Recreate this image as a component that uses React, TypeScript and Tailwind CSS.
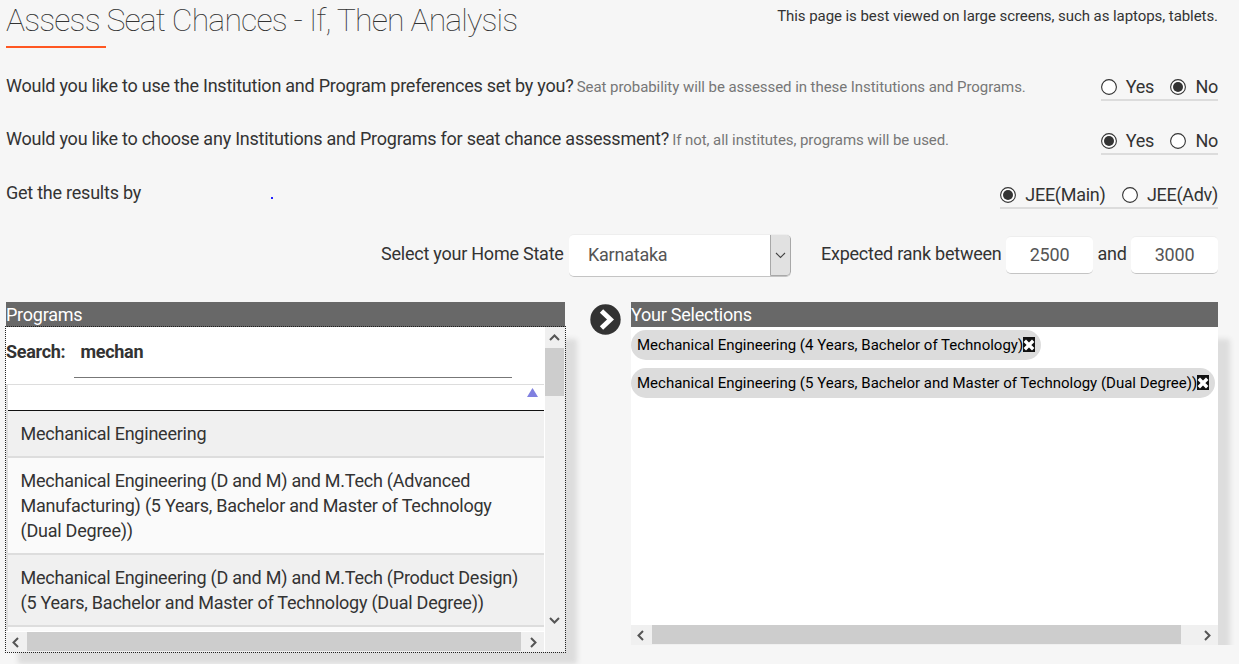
import React from "react";

type RadioProps = { label: string; checked?: boolean };

function Radio({ label, checked = false }: RadioProps) {
  return (
    <label className="flex items-center">
      <svg className="h-4 w-4 shrink-0" viewBox="0 0 16 16">
        <circle cx="8" cy="8" r="7.4" fill="#fff" stroke="#333" strokeWidth="1.1" />
        {checked && <circle cx="8" cy="8" r="5" fill="#333" />}
      </svg>
      <span className="ml-[9px]">{label}</span>
    </label>
  );
}

function RadioGroup({ options, selected }: { options: string[]; selected: string }) {
  return (
    <div className="flex h-[27px] gap-[16.5px] border-b-2 border-[#dcdcdc] tracking-[-0.29px] whitespace-nowrap">
      {options.map((o) => (
        <Radio key={o} label={o} checked={o === selected} />
      ))}
    </div>
  );
}

type Direction = "up" | "down" | "left" | "right";
const CHEVRONS: Record<Direction, string> = {
  up: "M1 8 L5.5 3.5 L10 8",
  down: "M1 3 L5.5 7.5 L10 3",
  left: "M8 1 L3.5 5.5 L8 10",
  right: "M3 1 L7.5 5.5 L3 10",
};

function Chevron({ dir }: { dir: Direction }) {
  return (
    <svg className="h-[11px] w-[11px]" viewBox="0 0 11 11">
      <path d={CHEVRONS[dir]} fill="none" stroke="#555" strokeWidth="2" />
    </svg>
  );
}

function Chip({ text }: { text: string }) {
  return (
    <div className="flex h-[30px] w-fit items-center rounded-full bg-[#dcdcdc] pr-1.5 pl-1.5 text-[15px] tracking-normal whitespace-nowrap text-black">
      <span>{text}</span>
      <svg className="mb-px h-[15px] w-3 shrink-0" viewBox="0 0 12 15">
        <rect width="12" height="15" fill="#111" />
        <path d="M1.8 3.8 L10.2 12.2 M10.2 3.8 L1.8 12.2" stroke="#fff" strokeWidth="3.4" />
      </svg>
    </div>
  );
}

function Question({ text, hint }: { text: string; hint: string }) {
  return (
    <p className="-mt-px whitespace-nowrap">
      {text} <span className="-ml-px text-[15px] tracking-[-0.06px] text-[#777]">{hint}</span>
    </p>
  );
}

export default function App() {
  return (
    <div className="h-[664px] w-[1239px] overflow-hidden bg-[#f6f6f6] pr-[21px] pl-1.5 font-[Roboto,sans-serif] text-[18px] leading-[25px] tracking-[-0.235px] text-[#333]">
      <header className="flex h-[74px] justify-between">
        <div>
          <h1 className="h-[46px] text-[32px] leading-[40px] font-thin tracking-[-0.87px] whitespace-nowrap">
            Assess Seat Chances - If, Then Analysis
          </h1>
          <div className="h-0.5 w-[100px] bg-[#ff5722]" />
        </div>
        <p className="pt-1 text-[15px] tracking-[-0.065px] whitespace-nowrap">
          This page is best viewed on large screens, such as laptops, tablets.
        </p>
      </header>

      <div className="flex h-[53px] justify-between">
        <Question
          text="Would you like to use the Institution and Program preferences set by you?"
          hint="Seat probability will be assessed in these Institutions and Programs."
        />
        <RadioGroup options={["Yes", "No"]} selected="No" />
      </div>
      <div className="flex h-[54px] justify-between">
        <Question
          text="Would you like to choose any Institutions and Programs for seat chance assessment?"
          hint="If not, all institutes, programs will be used."
        />
        <div className="pt-px">
          <RadioGroup options={["Yes", "No"]} selected="Yes" />
        </div>
      </div>
      <div className="flex h-[53px] justify-between">
        <div className="flex">
          <span className="-mt-px w-[264px]">Get the results by</span>
          <span className="mt-[16px] ml-px h-0.5 w-0.5 bg-[#2222ff]" />
        </div>
        <div className="pt-px">
          <RadioGroup options={["JEE(Main)", "JEE(Adv)"]} selected="JEE(Main)" />
        </div>
      </div>

      <div className="flex h-[68px] justify-end whitespace-nowrap">
        <span className="w-[188px] pt-[7px]">Select your Home State</span>
        <div className="mr-[30px] flex h-[43px] w-[222px] overflow-hidden rounded-[5px] border-t border-b border-t-[#eee] border-b-[#c4c4c4] bg-white">
          <span className="flex-1 pt-[7px] pl-[19px] text-[#555]">Karnataka</span>
          <span className="-mt-px flex w-[21px] items-center justify-center rounded-r-[4px] border border-[#a8a8a8] bg-[#e1e1e1]">
            <svg className="h-[7px] w-[11px]" viewBox="0 0 11 7">
              <path d="M1 1 L5.5 5.5 L10 1" fill="none" stroke="#444" strokeWidth="1.1" />
            </svg>
          </span>
        </div>
        <span className="w-[185px] pt-[7px]">Expected rank between</span>
        <span className="mt-0.5 h-[38px] w-[87px] rounded-[5px] border-t border-b border-t-[#eee] border-b-[#c4c4c4] bg-white pt-[5px] text-center text-[#555]">
          2500
        </span>
        <span className="w-[38px] pt-[7px] text-center">and</span>
        <span className="mt-0.5 h-[38px] w-[87px] rounded-[5px] border-t border-b border-t-[#eee] border-b-[#c4c4c4] bg-white pt-[5px] text-center text-[#555]">
          3000
        </span>
      </div>

      <main className="flex">
        <section className="w-[559px] shrink-0">
          <h2 className="h-[25px] bg-[#686868] text-white">Programs</h2>
          <div className="flex h-[325px] bg-[#f0f0f0] shadow-[12px_12px_5px_#ddd] outline outline-dotted outline-[#222]">
            <div className="flex w-[539px] flex-col border-r border-white">
              <div className="flex h-[57px] bg-white font-bold tracking-[-0.3px]">
                <span className="w-[68px] pt-3">Search:</span>
                <span className="h-[51px] w-[438px] border-b border-[#777] pt-3 pl-[6.5px]">mechan</span>
              </div>
              <div className="h-[247px] overflow-hidden border-t border-l-2 border-[#ddd] bg-[#fafafa]">
                <div className="flex h-[26px] justify-end border-b border-[#111] bg-white pt-[3px] pr-[6.5px]">
                  <svg className="h-[9px] w-[11px]" viewBox="0 0 11 9">
                    <path d="M5.5 0 L11 9 H0 Z" fill="#8080e0" />
                  </svg>
                </div>
                <div className="h-[47px] border-b-2 border-[#ddd] bg-[#f0f0f0] pt-2.5 pl-[12.5px]">
                  Mechanical Engineering
                </div>
                <div className="h-[97px] border-b-2 border-[#ddd] pt-2.5 pl-[12.5px] whitespace-nowrap">
                  Mechanical Engineering (D and M) and M.Tech (Advanced
                  <br />
                  Manufacturing) (5 Years, Bachelor and Master of Technology
                  <br />
                  (Dual Degree))
                </div>
                <div className="h-[72px] border-b-2 border-[#ddd] bg-[#f0f0f0] pt-2.5 pl-[12.5px] whitespace-nowrap">
                  Mechanical Engineering (D and M) and M.Tech (Product Design)
                  <br />
                  (5 Years, Bachelor and Master of Technology (Dual Degree))
                </div>
              </div>
              <div className="flex h-[21px] items-center border-t border-white bg-[#f0f0f0]">
                <span className="flex w-[21px] pl-1">
                  <Chevron dir="left" />
                </span>
                <span className="mb-px h-[19px] w-[494px] bg-[#cdcdcd]" />
                <span className="flex flex-1 pl-[7px]">
                  <Chevron dir="right" />
                </span>
              </div>
            </div>
            <div className="flex w-5 flex-col items-start">
              <span className="flex h-[21px] items-center pl-1">
                <Chevron dir="up" />
              </span>
              <span className="h-12 w-[19px] bg-[#cdcdcd]" />
              <span className="mt-auto mb-[26px] pl-1">
                <Chevron dir="down" />
              </span>
            </div>
          </div>
        </section>

        <div className="w-[66px] shrink-0 pt-0.5 pl-[25px]">
          <svg className="h-[31px] w-[31px]" viewBox="0 0 31 31">
            <circle cx="15.5" cy="15.5" r="15.2" fill="#333" />
            <path d="M11.5 7 L20.5 15.5 L11.5 24" fill="none" stroke="#fff" strokeWidth="4.8" />
          </svg>
        </div>

        <section className="h-[343px] w-[608px] shrink-0 overflow-hidden">
          <div className="w-[587px]">
            <h2 className="h-[25px] bg-[#686868] text-white">Your Selections</h2>
            <div className="flex h-[318px] flex-col bg-white shadow-[12px_12px_5px_#ddd]">
              <div className="flex h-[298px] flex-col gap-2 pt-[3px]">
                <Chip text="Mechanical Engineering (4 Years, Bachelor of Technology)" />
                <Chip text="Mechanical Engineering (5 Years, Bachelor and Master of Technology (Dual Degree))" />
              </div>
              <div className="flex h-5 items-center bg-[#f0f0f0]">
                <span className="flex w-[21px] pl-1">
                  <Chevron dir="left" />
                </span>
                <span className="mb-px h-[19px] w-[529px] bg-[#cdcdcd]" />
                <span className="ml-[21px]">
                  <Chevron dir="right" />
                </span>
              </div>
            </div>
          </div>
        </section>
      </main>
    </div>
  );
}
